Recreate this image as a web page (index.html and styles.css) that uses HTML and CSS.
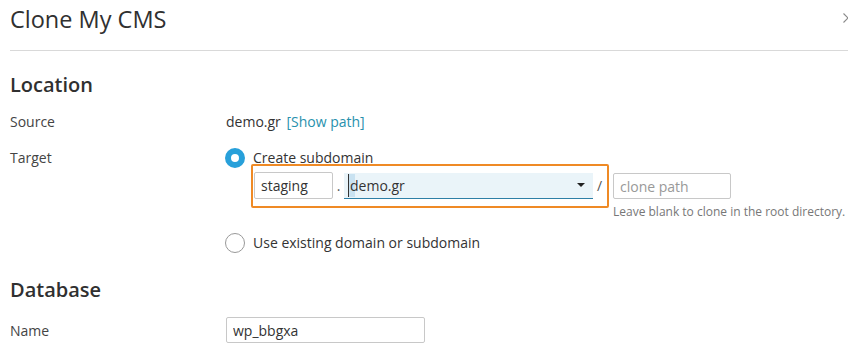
FILE: index.html
```html
<!DOCTYPE html>
<html lang="en">

<head>
  <meta charset="UTF-8">
  <meta name="viewport" content="width=device-width, initial-scale=1.0">
  <title>Clone My CMS</title>
  <link rel="stylesheet" href="styles.css">
</head>

<body>
  <div class="dialog-header">
    <h1>Clone My CMS</h1>
    <svg class="close" width="10" height="10" viewBox="0 0 10 10">
      <path d="M0.5 0.5 L9.5 9.5 M9.5 0.5 L0.5 9.5" stroke="#8a8a8a" stroke-width="1.1" fill="none" />
    </svg>
  </div>

  <div class="section">
    <h2>Location</h2>

    <div class="form-row">
      <div class="label">Source</div>
      <div class="field">demo.gr <a href="#" class="link">[Show path]</a></div>
    </div>

    <div class="form-row">
      <div class="label">Target</div>
      <div class="field">
        <div class="radio-line">
          <span class="radio checked"></span>
          <span>Create subdomain</span>
        </div>

        <div class="subdomain-row">
          <div class="highlight">
            <input type="text" class="input input-sub" value="staging">
            <span class="sep">.</span>
            <div class="select">
              <span class="select-value"><span class="caret-mark"></span>demo.gr</span>
              <span class="arrow"></span>
            </div>
            <span class="sep slash">/</span>
          </div>
          <div class="path-box">
            <input type="text" class="input input-path" placeholder="clone path">
            <div class="hint">Leave blank to clone in the root directory.</div>
          </div>
        </div>

        <div class="radio-line radio-second">
          <span class="radio"></span>
          <span>Use existing domain or subdomain</span>
        </div>
      </div>
    </div>
  </div>

  <div class="section section-db">
    <h2>Database</h2>

    <div class="form-row">
      <div class="label label-input">Name</div>
      <div class="field">
        <input type="text" class="input input-name" value="wp_bbgxa">
      </div>
    </div>
  </div>
</body>

</html>
```

FILE: styles.css
```css
body {
  font-family: 'Open Sans', 'Segoe UI', sans-serif;
  font-size: 14px;
  color: #333;
  margin: 0;
  padding: 0 0 0 10px;
  background: #fff;
  overflow: hidden;
}

.dialog-header {
  display: flex;
  justify-content: space-between;
  align-items: flex-start;
  height: 50px;
  border-bottom: 1px solid #d9d9d9;
}

h1 {
  font-size: 23.5px;
  font-weight: 400;
  margin: 0;
  padding-top: 3px;
  line-height: 32px;
  color: #303030;
}

.close {
  margin-top: 13px;
  margin-right: -5px;
  flex-shrink: 0;
}

.section {
  padding-top: 21px;
}

.section-db {
  padding-top: 25px;
}

h2 {
  font-size: 20px;
  font-weight: 600;
  margin: 0 0 14px;
  line-height: 26px;
  color: #303030;
}

.form-row {
  display: flex;
  margin-bottom: 17px;
  line-height: 19px;
}

.form-row:last-child {
  margin-bottom: 0;
}

.label {
  width: 216px;
  flex-shrink: 0;
  color: #444;
}

.label-input {
  padding-top: 4px;
}

.field {
  flex: 1;
}

.link {
  color: #2891ad;
  text-decoration: none;
  margin-left: 2px;
}

.radio-line {
  display: flex;
  align-items: center;
  gap: 8px;
  height: 19px;
  margin-left: -1px;
}

.radio {
  width: 20px;
  height: 20px;
  flex-shrink: 0;
  box-sizing: border-box;
  border-radius: 50%;
  border: 1px solid #999;
  background: #fff;
}

.radio.checked {
  border: 6px solid #28a0da;
}

.subdomain-row {
  display: flex;
  align-items: flex-start;
  margin-left: 25px;
  margin-top: -3px;
}

.highlight {
  display: flex;
  align-items: center;
  border: 2px solid #ef8a25;
  border-radius: 2px;
  padding: 6px 0 7px 1px;
  width: 353px;
}

.input {
  font-family: inherit;
  font-size: 14px;
  color: #333;
  height: 26px;
  box-sizing: border-box;
  border: 1px solid #c8c8c8;
  border-radius: 2px;
  padding: 0 6px;
  outline: none;
}

.input::placeholder {
  color: #999;
}

.input-sub {
  width: 79px;
  height: 27px;
}

.sep {
  width: 11px;
  flex-shrink: 0;
  text-align: center;
  color: #555;
}

.select {
  width: 249px;
  flex-shrink: 0;
  height: 26px;
  display: flex;
  align-items: center;
  justify-content: space-between;
  background: #eaf4f9;
  border-bottom: 1px solid #2d7fa6;
  box-sizing: border-box;
  padding: 0 8px 0 6px;
}

.select-value {
  position: relative;
  z-index: 0;
}

.caret-mark {
  position: absolute;
  left: -2px;
  top: -2px;
  width: 6px;
  height: 23px;
  background: #c9e2f1;
  border-left: 1px solid #333;
  z-index: -1;
}

.arrow {
  width: 0;
  height: 0;
  border-left: 4px solid transparent;
  border-right: 4px solid transparent;
  border-top: 4px solid #222;
}

.slash {
  width: 13px;
}

.path-box {
  padding-top: 9px;
  margin-left: 4px;
}

.input-path {
  width: 118px;
}

.hint {
  font-size: 12px;
  line-height: 16px;
  color: #777;
  margin-top: 5px;
}

.radio-second {
  margin-top: 13px;
}

.input-name {
  width: 199px;
}
```
